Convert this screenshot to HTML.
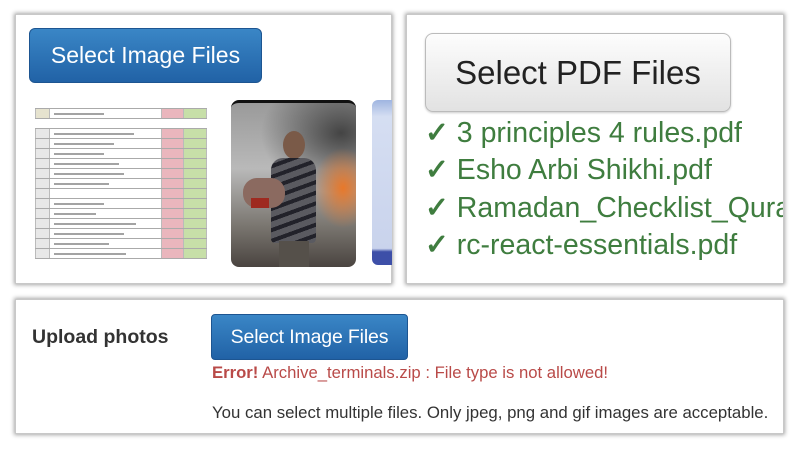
<!DOCTYPE html>
<html><head><meta charset="utf-8"><style>
*{margin:0;padding:0;box-sizing:border-box}
body{width:800px;height:449px;background:#fff;position:relative;overflow:hidden;font-family:"Liberation Sans",sans-serif}
.panel{position:absolute;background:#fff;border:1px solid #c8c8c8;box-shadow:0 0 4px 1px rgba(0,0,0,.35)}
.btn{position:absolute;border-radius:6px;color:#fff;background:linear-gradient(#3a86c6,#2162a6);border:1px solid #1d5591;display:flex;align-items:center;justify-content:center}
.gbtn{position:absolute;border-radius:8px;color:#222;background:linear-gradient(#fdfdfd,#e2e2e2);border:1px solid #bbb;display:flex;align-items:center;justify-content:center;box-shadow:0 1px 2px rgba(0,0,0,.2)}
.tbl{position:absolute;left:35px;top:108px;width:172px}
.row{position:relative;height:10px;border-bottom:1px solid #aaa;display:flex}
.row div{height:100%;border-right:1px solid #bbb}
.c1{width:15px;background:#e8e8e8;border-left:1px solid #bbb}
.c2{width:112px;background:#fff;position:relative}
.c2 i{position:absolute;left:4px;top:4px;height:2px;background:#666;opacity:.6}
.c3{width:22px;background:#eab6bd}
.c4{width:23px;background:#c7dfa8}
.li{position:absolute;left:425px;color:#3f7d3f;font-size:28.5px;white-space:nowrap}
.li b{font-weight:bold}
</style></head><body>
<div class="panel" style="left:15px;top:14px;width:377px;height:270px;overflow:hidden">
</div>
<div class="btn" style="left:29px;top:28px;width:233px;height:55px;font-size:23px">Select Image Files</div>
<div class="tbl">
 <div class="row" style="height:11px;border-top:1px solid #aaa"><div class="c1" style="background:#e6e3cf"></div><div class="c2"><i style="width:50px"></i></div><div class="c3"></div><div class="c4"></div></div>
 <div style="height:9px"></div>
 <div style="border-top:1px solid #aaa">
 <div class="row"><div class="c1"></div><div class="c2"><i style="width:80px"></i></div><div class="c3"></div><div class="c4"></div></div>
 <div class="row"><div class="c1"></div><div class="c2"><i style="width:60px"></i></div><div class="c3"></div><div class="c4"></div></div>
 <div class="row"><div class="c1"></div><div class="c2"><i style="width:50px"></i></div><div class="c3"></div><div class="c4"></div></div>
 <div class="row"><div class="c1"></div><div class="c2"><i style="width:65px"></i></div><div class="c3"></div><div class="c4"></div></div>
 <div class="row"><div class="c1"></div><div class="c2"><i style="width:70px"></i></div><div class="c3"></div><div class="c4"></div></div>
 <div class="row"><div class="c1"></div><div class="c2"><i style="width:55px"></i></div><div class="c3"></div><div class="c4"></div></div>
 <div class="row"><div class="c1"></div><div class="c2"></div><div class="c3"></div><div class="c4"></div></div>
 <div class="row"><div class="c1"></div><div class="c2"><i style="width:50px"></i></div><div class="c3"></div><div class="c4"></div></div>
 <div class="row"><div class="c1"></div><div class="c2"><i style="width:42px"></i></div><div class="c3"></div><div class="c4"></div></div>
 <div class="row"><div class="c1"></div><div class="c2"><i style="width:82px"></i></div><div class="c3"></div><div class="c4"></div></div>
 <div class="row"><div class="c1"></div><div class="c2"><i style="width:70px"></i></div><div class="c3"></div><div class="c4"></div></div>
 <div class="row"><div class="c1"></div><div class="c2"><i style="width:55px"></i></div><div class="c3"></div><div class="c4"></div></div>
 <div class="row"><div class="c1"></div><div class="c2"><i style="width:72px"></i></div><div class="c3"></div><div class="c4"></div></div>
 </div>
</div>
<div style="position:absolute;left:231px;top:100px;width:125px;height:167px;border-radius:8px;border-top:3px solid #111;overflow:hidden;background:radial-gradient(ellipse 30px 40px at 112px 85px,#e8782a,rgba(232,120,42,0) 100%),radial-gradient(ellipse 80px 60px at 110px 30px,#444,rgba(60,60,60,0)),linear-gradient(#9a9a9a,#b9b9b9 40%,#7a7670 75%,#4a4440)">
 <div style="position:absolute;left:52px;top:28px;width:22px;height:28px;border-radius:50%;background:#7a5a48"></div>
 <div style="position:absolute;left:40px;top:55px;width:45px;height:85px;border-radius:12px 12px 4px 4px;background:repeating-linear-gradient(160deg,#5a5a60 0 6px,#22222a 6px 10px)"></div>
 <div style="position:absolute;left:12px;top:75px;width:42px;height:30px;border-radius:14px;background:#8b6a60"></div>
 <div style="position:absolute;left:20px;top:95px;width:18px;height:10px;background:#9e2a20"></div>
 <div style="position:absolute;left:48px;top:138px;width:30px;height:29px;background:#55504a"></div>
</div>
<div style="position:absolute;left:372px;top:100px;width:20px;height:165px;border-radius:6px 0 0 6px;background:linear-gradient(#9fb5e0,#d5def2 10%,#c9d3ec 90%,#3d4fa8 92%)"></div>

<div class="panel" style="left:406px;top:14px;width:378px;height:270px"></div>
<div class="gbtn" style="left:425px;top:33px;width:306px;height:79px;font-size:33px">Select PDF Files</div>
<div class="li" style="top:116px"><b>✓</b> 3 principles 4 rules.pdf</div>
<div class="li" style="top:153px"><b>✓</b> Esho Arbi Shikhi.pdf</div>
<div class="li" style="top:191px;width:358px;overflow:hidden"><b>✓</b> Ramadan_Checklist_Quran.pdf</div>
<div class="li" style="top:228px"><b>✓</b> rc-react-essentials.pdf</div>

<div class="panel" style="left:15px;top:299px;width:769px;height:135px"></div>
<div style="position:absolute;left:32px;top:326px;font-size:19.5px;font-weight:bold;color:#333">Upload photos</div>
<div class="btn" style="left:211px;top:314px;width:197px;height:46px;font-size:19.5px;border-radius:4px;letter-spacing:-.15px">Select Image Files</div>
<div style="position:absolute;left:212px;top:363px;font-size:16.7px;color:#b94a48;white-space:nowrap;letter-spacing:0"><b>Error!</b> Archive_terminals.zip : File type is not allowed!</div>
<div style="position:absolute;left:212px;top:403px;font-size:16.8px;color:#333;white-space:nowrap;letter-spacing:0">You can select multiple files. Only jpeg, png and gif images are acceptable.</div>
</body></html>
